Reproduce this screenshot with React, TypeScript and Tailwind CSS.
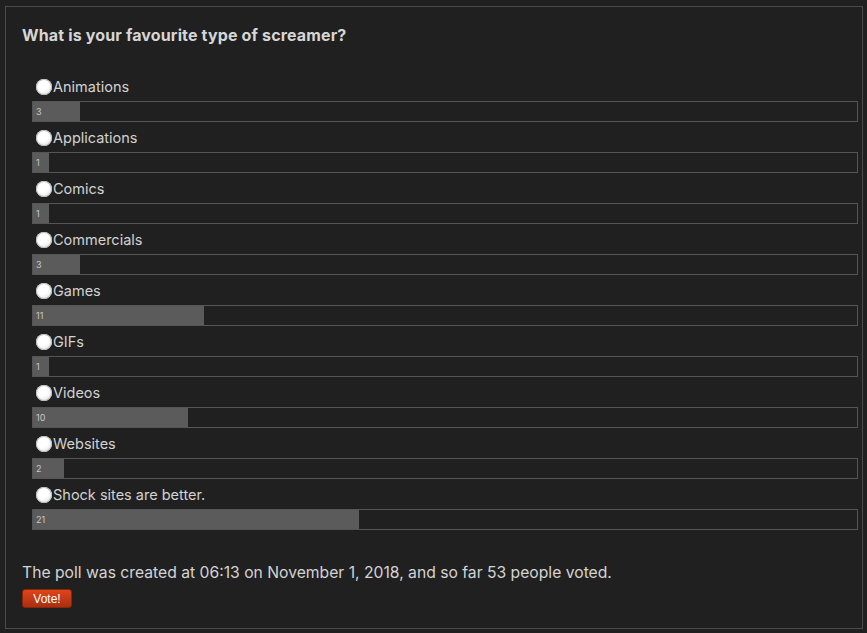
const options = [
  { label: "Animations", votes: 3 },
  { label: "Applications", votes: 1 },
  { label: "Comics", votes: 1 },
  { label: "Commercials", votes: 3 },
  { label: "Games", votes: 11 },
  { label: "GIFs", votes: 1 },
  { label: "Videos", votes: 10 },
  { label: "Websites", votes: 2 },
  { label: "Shock sites are better.", votes: 21 },
];

const total = 53;

export default function App() {
  return (
    <div className="min-h-screen bg-[#202020] pl-[5px] pt-[6px] font-['Inter','Noto_Sans',sans-serif]">
      <div className="h-[623px] w-[858px] border border-[#4b4b4b] pl-[16px] pr-[4px] pt-[18px]">
        <h1 className="text-[16px] font-bold leading-[20px] text-[#d6d6d6] tracking-[0.15px]">
          What is your favourite type of screamer?
        </h1>

        <div className="pt-[31px] pl-[10px]">
          {options.map((o) => (
            <div key={o.label} className="pt-[1px] pb-[5px]">
              <label className="flex h-[20px] items-center pl-[4px] text-[14.5px] text-[#d2d2d2]">
                <span className="h-[16px] w-[16px] rounded-full bg-[radial-gradient(circle_at_40%_35%,#ffffff_40%,#d4d4d4_100%)] shadow-[inset_0_0_0_1px_#bdbdbd]" />
                <span className="ml-[1px]">{o.label}</span>
              </label>
              <div className="mt-[4px] h-[21px] w-[826px] border border-[#555555]">
                <div
                  className="flex h-full items-center bg-[#5b5b5b] pl-[3px] text-[9px] text-[#c8c8c8]"
                  style={{ width: `${(o.votes / total) * 100}%` }}
                >
                  {o.votes}
                </div>
              </div>
            </div>
          ))}
        </div>

        <p className="pt-[28px] text-[15.7px] leading-[20px] text-[#d4d4d4]">
          The poll was created at 06:13 on November 1, 2018, and so far 53 people voted.
        </p>
        <button className="mt-[6px] flex h-[19px] w-[50px] items-center justify-center rounded-[3px] border border-[#8a240a] bg-gradient-to-b from-[#e0451a] to-[#a8300f] font-['Liberation_Sans',Arial,sans-serif] text-[12px] text-white">
          Vote!
        </button>
      </div>
    </div>
  );
}
